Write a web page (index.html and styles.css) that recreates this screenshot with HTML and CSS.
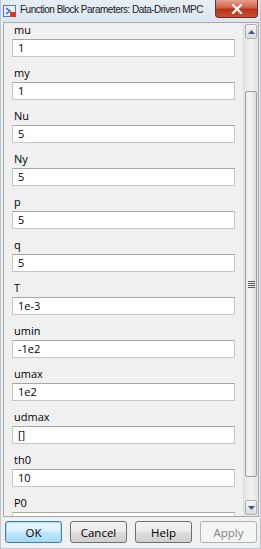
FILE: index.html
```html
<!DOCTYPE html>
<html>
<head>
<meta charset="utf-8">
<link rel="stylesheet" href="styles.css">
</head>
<body>
<div class="window">
  <div class="titlebar">
    <svg class="appicon" width="14" height="14" viewBox="0 0 14 14">
      <rect x="0.5" y="1.5" width="12" height="11" fill="#e8eef6" stroke="#5a7fae"/>
      <path d="M3 4 L7 7 L3 10" fill="none" stroke="#3a6aa8" stroke-width="1.5"/>
      <rect x="7" y="8" width="6" height="5" fill="#d04020"/>
    </svg>
    <span class="title">Function Block Parameters: Data-Driven MPC</span>
    <div class="close">
      <svg width="12" height="10" viewBox="0 0 12 10"><path d="M2 1 L10 9 M10 1 L2 9" stroke="#fff" stroke-width="2.2" stroke-linecap="square"/></svg>
    </div>
  </div>
  <div class="main">
    <div class="panel">
      <div class="field"><div class="label">mu</div><div class="input">1</div></div>
      <div class="field"><div class="label">my</div><div class="input">1</div></div>
      <div class="field"><div class="label">Nu</div><div class="input">5</div></div>
      <div class="field"><div class="label">Ny</div><div class="input">5</div></div>
      <div class="field"><div class="label">p</div><div class="input">5</div></div>
      <div class="field"><div class="label">q</div><div class="input">5</div></div>
      <div class="field"><div class="label">T</div><div class="input">1e-3</div></div>
      <div class="field"><div class="label">umin</div><div class="input">-1e2</div></div>
      <div class="field"><div class="label">umax</div><div class="input">1e2</div></div>
      <div class="field"><div class="label">udmax</div><div class="input">[]</div></div>
      <div class="field"><div class="label">th0</div><div class="input">10</div></div>
      <div class="field"><div class="label">P0</div><div class="input"></div></div>
    </div>
    <div class="scrollbar">
      <div class="arrow">
        <svg width="7" height="4" viewBox="0 0 7 4"><path d="M0 4 L3.5 0 L7 4Z" fill="#4a5a70"/></svg>
      </div>
      <div class="track">
        <div class="thumb">
          <div class="grip"><i></i><i></i><i></i><i></i></div>
        </div>
      </div>
      <div class="arrow">
        <svg width="7" height="4" viewBox="0 0 7 4"><path d="M0 0 L3.5 4 L7 0Z" fill="#4a5a70"/></svg>
      </div>
    </div>
  </div>
  <div class="footer">
    <div class="btn default">OK</div>
    <div class="btn">Cancel</div>
    <div class="btn">Help</div>
    <div class="btn disabled">Apply</div>
  </div>
</div>
</body>
</html>
```

FILE: styles.css
```css
html, body {
  margin: 0;
  padding: 0;
}
body {
  font-family: "Open Sans", "DejaVu Sans", sans-serif;
  font-size: 11px;
  color: #000;
  background: #f0f0f0;
}
.window {
  width: 261px;
  height: 549px;
  background: #f0f0f0;
  display: flex;
  flex-direction: column;
  overflow: hidden;
  box-sizing: border-box;
  border-left: 1px solid #b9c9da;
  border-right: 1px solid #b9c9da;
  border-bottom: 1px solid #b9c9da;
}
.titlebar {
  height: 22px;
  flex: none;
  display: flex;
  align-items: flex-start;
  background: linear-gradient(#e6edf5, #dde6f0);
  position: relative;
}
.appicon {
  margin: 4px 0 0 2px;
  flex: none;
}
.title {
  margin: 4px 0 0 3px;
  font-family: "Liberation Sans", Arial, sans-serif;
  font-size: 10px;
  letter-spacing: -0.5px;
  color: #1a1a1a;
  white-space: nowrap;
}
.close {
  position: absolute;
  top: 0;
  right: 2px;
  width: 43px;
  height: 18px;
  border: 1px solid #7a2a20;
  border-top: none;
  border-radius: 0 0 4px 4px;
  box-sizing: border-box;
  background: linear-gradient(#e8a090 0%, #d06048 45%, #b83418 55%, #c85030 100%);
  display: flex;
  align-items: center;
  justify-content: center;
}
.main {
  flex: 1;
  display: flex;
  min-height: 0;
  margin: 0 1px 0 2px;
  border: 1px solid #a8a8a8;
}
.panel {
  flex: 1;
  overflow: hidden;
  padding: 0 8px 0 8px;
  display: flex;
  flex-direction: column;
  border-right: 1px solid #dcdcdc;
}
.field {
  height: 43px;
  flex: none;
  display: flex;
  flex-direction: column;
}
.label {
  height: 16px;
  line-height: 14px;
  padding-left: 2px;
}
.input {
  height: 18px;
  line-height: 16px;
  box-sizing: border-box;
  background: #fff;
  border: 1px solid #c6c6c6;
  border-top-color: #a6a6a6;
  padding-left: 5px;
  width: 223px;
}
.scrollbar {
  width: 14px;
  flex: none;
  display: flex;
  flex-direction: column;
  background: linear-gradient(90deg, #e4e4e4, #f2f2f2 50%, #e4e4e4);
  padding: 1px 0;
  box-sizing: border-box;
}
.arrow {
  height: 13px;
  flex: none;
  margin: 0 1px;
  border: 1px solid #b0b0b0;
  border-radius: 2px;
  background: linear-gradient(#f4f4f4, #dcdcdc);
  display: flex;
  align-items: center;
  justify-content: center;
}
.track {
  flex: 1;
  display: flex;
  flex-direction: column;
  padding: 52px 0 23px;
}
.thumb {
  flex: 1;
  margin: 0 1px;
  border: 1px solid #a0a0a0;
  border-radius: 2px;
  background: linear-gradient(90deg, #e8e8e8, #f6f6f6 40%, #dadada);
  display: flex;
  align-items: center;
  justify-content: center;
}
.grip {
  display: flex;
  flex-direction: column;
  gap: 1px;
}
.grip i {
  display: block;
  width: 7px;
  height: 1px;
  background: #5a5a5a;
}
.footer {
  height: 31px;
  flex: none;
  display: flex;
  gap: 8px;
  padding: 4px 2px 0 4px;
  box-sizing: border-box;
}
.btn {
  width: 57px;
  height: 22px;
  box-sizing: border-box;
  border: 1px solid #707070;
  border-radius: 3px;
  background: linear-gradient(#f2f2f2 0%, #ebebeb 48%, #dddddd 52%, #cfcfcf 100%);
  display: flex;
  align-items: center;
  justify-content: center;
  font-size: 11.5px;
}
.btn.default {
  border-color: #3c7fb1;
  box-shadow: inset 0 0 0 1px #9fdcf6;
  background: linear-gradient(#eaf6fd 0%, #d9f0fc 48%, #bee6fd 52%, #a7d9f5 100%);
}
.btn.disabled {
  border-color: #adb2b5;
  background: #f4f4f4;
  color: #838383;
}
```
